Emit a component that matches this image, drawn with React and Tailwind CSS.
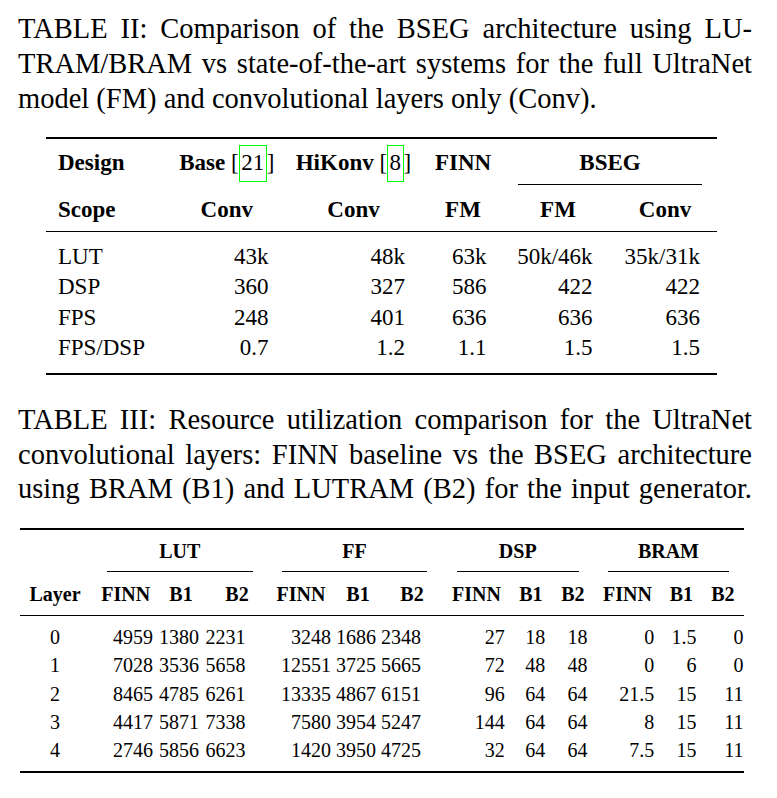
import React from 'react';

const t2cols = [
  'ml-[12px] w-[108px] justify-start',
  'ml-[19px] w-[83.5px]',
  'ml-[33.5px] w-[103px]',
  'ml-[34.5px] w-[47px]',
  'ml-[36.9px] w-[69.2px]',
  'ml-[37.4px] w-[70px]',
];

const t2rows = [
  ['LUT', '43k', '48k', '63k', '50k/46k', '35k/31k'],
  ['DSP', '360', '327', '586', '422', '422'],
  ['FPS', '248', '401', '636', '636', '636'],
  ['FPS/DSP', '0.7', '1.2', '1.1', '1.5', '1.5'],
];

const t3cols = [
  'w-[70px]',
  'ml-[8.4px] w-[54.6px]',
  'ml-[10px] w-[36px]',
  'ml-[29.6px] w-[16.8px]',
  'ml-[25.6px] w-[60px]',
  'ml-[9px] w-[36px]',
  'ml-[27px] w-[18px]',
  'ml-[27.3px] w-[56.4px]',
  'ml-[11.9px] w-[28.8px]',
  'ml-[13.1px] w-[29px]',
  'ml-[13.1px] w-[53.8px]',
  'ml-[12px] w-[30.2px]',
  'ml-[5.7px] w-[41.4px]',
];

const t3groups = [
  { name: 'LUT', cls: 'ml-[86.6px] w-[146.2px]' },
  { name: 'FF', cls: 'ml-[28.8px] w-[145.8px]' },
  { name: 'DSP', cls: 'ml-[29.6px] w-[121.6px]' },
  { name: 'BRAM', cls: 'ml-[29.4px] w-[121px]' },
];

const t3head = ['Layer', 'FINN', 'B1', 'B2', 'FINN', 'B1', 'B2', 'FINN', 'B1', 'B2', 'FINN', 'B1', 'B2'];

const t3rows = [
  ['0', '4959', '1380', '2231', '3248', '1686', '2348', '27', '18', '18', '0', '1.5', '0'],
  ['1', '7028', '3536', '5658', '12551', '3725', '5665', '72', '48', '48', '0', '6', '0'],
  ['2', '8465', '4785', '6261', '13335', '4867', '6151', '96', '64', '64', '21.5', '15', '11'],
  ['3', '4417', '5871', '7338', '7580', '3954', '5247', '144', '64', '64', '8', '15', '11'],
  ['4', '2746', '5856', '6623', '1420', '3950', '4725', '32', '64', '64', '7.5', '15', '11'],
];

function Cite({ n }) {
  return (
    <span className="font-normal">
      [<span className="border border-[#00ff00] px-[1.5px] pt-[3.5px] pb-[6px]">{n}</span>]
    </span>
  );
}

export default function App() {
  const justify = 'text-justify [text-align-last:justify]';

  return (
    <div className="w-[777px] h-[798px] bg-white text-black font-['Liberation_Serif','Times_New_Roman',serif] overflow-hidden">
      {/* caption II */}
      <div className="pt-[12.2px] pl-[18px] w-[752px] text-[28.5px] leading-[34.65px]">
        <div className={justify}>TABLE II: Comparison of the BSEG architecture using LU-</div>
        <div className={justify}>TRAM/BRAM vs state-of-the-art systems for the full UltraNet</div>
        <div>model (FM) and convolutional layers only (Conv).</div>
      </div>

      {/* table II */}
      <div className="ml-[46px] mt-[21px] w-[671px] text-[23px]">
        <div className="h-[1.5px] bg-black" />
        <div className="flex items-start pt-[11px] font-bold leading-[25px]">
          <div className={'flex shrink-0 whitespace-nowrap ' + t2cols[0]}>Design</div>
          <div className={'flex shrink-0 justify-center whitespace-nowrap ' + t2cols[1]}>
            <span>Base&nbsp;<Cite n="21" /></span>
          </div>
          <div className={'flex shrink-0 justify-center whitespace-nowrap ' + t2cols[2]}>
            <span>HiKonv&nbsp;<Cite n="8" /></span>
          </div>
          <div className={'flex shrink-0 justify-center whitespace-nowrap ' + t2cols[3]}>FINN</div>
          <div className="flex shrink-0 justify-center ml-[31.5px] w-[184px] pb-[9.8px] border-b border-black">BSEG</div>
        </div>
        <div className="flex pt-[11.2px] pb-[9.8px] font-bold leading-[25px]">
          {['Scope', 'Conv', 'Conv', 'FM', 'FM', 'Conv'].map((h, i) => (
            <div key={i} className={'flex shrink-0 justify-center whitespace-nowrap ' + t2cols[i]}>{h}</div>
          ))}
        </div>
        <div className="h-[1px] bg-black" />
        <div className="pt-[9.5px] pb-[9.5px] leading-[30.5px]">
          {t2rows.map((row) => (
            <div key={row[0]} className="flex">
              {row.map((v, i) => (
                <div key={i} className={'flex shrink-0 justify-end whitespace-nowrap ' + t2cols[i]}>{v}</div>
              ))}
            </div>
          ))}
        </div>
        <div className="h-[1.5px] bg-black" />
      </div>

      {/* caption III */}
      <div className="mt-[28.2px] pl-[18px] w-[752px] text-[28.5px] leading-[34.65px]">
        <div className={justify}>TABLE III: Resource utilization comparison for the UltraNet</div>
        <div className={justify}>convolutional layers: FINN baseline vs the BSEG architecture</div>
        <div className={justify}>using BRAM (B1) and LUTRAM (B2) for the input generator.</div>
      </div>

      {/* table III */}
      <div className="ml-[20px] mt-[21.3px] w-[724px] text-[20px]">
        <div className="h-[2px] bg-black" />
        <div className="flex items-start pt-[8.75px] font-bold leading-[24px]">
          {t3groups.map((g) => (
            <div key={g.name} className={'flex shrink-0 justify-center pb-[8.25px] border-b border-black ' + g.cls}>
              {g.name}
            </div>
          ))}
        </div>
        <div className="flex pt-[9.75px] pb-[9.25px] font-bold leading-[24px]">
          {t3head.map((h, i) => (
            <div key={i} className={'flex shrink-0 justify-center whitespace-nowrap ' + t3cols[i]}>{h}</div>
          ))}
        </div>
        <div className="h-[1px] bg-black" />
        <div className="pt-[6.6px] pb-[6.9px] leading-[28.3px]">
          {t3rows.map((row) => (
            <div key={row[0]} className="flex">
              {row.map((v, i) => (
                <div
                  key={i}
                  className={'flex shrink-0 whitespace-nowrap ' + (i === 0 ? 'justify-center ' : 'justify-end ') + t3cols[i]}
                >
                  {v}
                </div>
              ))}
            </div>
          ))}
        </div>
        <div className="h-[2px] bg-black" />
      </div>
    </div>
  );
}
